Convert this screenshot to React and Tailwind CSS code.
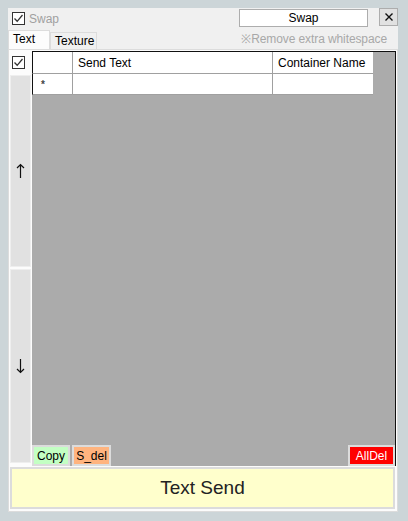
import React from 'react';

const Check = ({ className = '' }) => (
  <div className={`w-[13px] h-[13px] border border-[#333] bg-white flex items-center justify-center ${className}`}>
    <svg width="11" height="11" viewBox="0 0 11 11">
      <path d="M1.5 5.5 L4.2 8.3 L9.5 2" fill="none" stroke="#333" strokeWidth="1.3" />
    </svg>
  </div>
);

const GridButton = ({ label, color, text = 'text-black', pad = 'px-[2px]' }) => (
  <div className="border-2 border-[#dcdcdc] bg-[#dcdcdc]">
    <div className={`${pad} h-[17px] flex items-center justify-center text-[12px] ${color} ${text}`}>{label}</div>
  </div>
);

const Arrow = ({ down }) => (
  <svg width="9" height="16" viewBox="0 0 9 16">
    {down ? (
      <path d="M4.5 1 V14.5 M1 11 L4.5 14.5 L8 11" fill="none" stroke="#111" strokeWidth="1.2" />
    ) : (
      <path d="M4.5 15 V1.5 M1 5 L4.5 1.5 L8 5" fill="none" stroke="#111" strokeWidth="1.2" />
    )}
  </svg>
);

export default function App() {
  return (
    <div
      className="w-[408px] h-[521px] bg-[#ccd5d8] pt-[8px] pl-[8px]"
      style={{ fontFamily: '"Liberation Sans", Arial, sans-serif' }}
    >
      <div className="w-[390px] h-[504px] bg-[#f0f0f0] flex flex-col">
        {/* top row */}
        <div className="h-[22px] flex items-start">
          <div className="flex items-center mt-[4px] ml-[4px] gap-[4px]">
            <Check />
            <span className="text-[12px] text-[#a0a0a0] leading-none">Swap</span>
          </div>
          <div className="ml-auto mt-[1px] w-[129px] h-[18px] bg-white border border-[#adadad] flex items-center justify-center text-[12px] text-black">
            Swap
          </div>
          <div className="ml-[11px] w-[19px] h-[18px] bg-[#e1e1e1] border border-[#adadad] flex items-center justify-center">
            <svg width="10" height="10" viewBox="0 0 10 10">
              <path d="M1.5 1.5 L8.5 8.5 M8.5 1.5 L1.5 8.5" stroke="#111" strokeWidth="1.4" />
            </svg>
          </div>
        </div>

        {/* tabs row */}
        <div className="h-[19px] flex items-end">
          <div className="w-[42px] h-[19px] bg-[#fcfcfc] border border-b-0 border-[#dcdcdc] text-[12px] text-black pl-[4px] leading-[16px]">
            Text
          </div>
          <div className="w-[47px] h-[17px] bg-[#f0f0f0] border border-b-0 border-[#dcdcdc] text-[12px] text-black pl-[4px] leading-[17px]">
            Texture
          </div>
          <div className="ml-auto mr-[11px] self-start mt-[3px] text-[12px] text-[#a8a8a8] leading-none tracking-[-0.1px]">
            ※Remove extra whitespace
          </div>
        </div>

        {/* tab page */}
        <div className="flex-1 bg-[#fcfcfc] border border-[#dcdcdc] flex flex-col">
          <div className="flex flex-1">
            {/* left column */}
            <div className="w-[23px] flex flex-col items-start">
              <Check className="mt-[6px] ml-[3px]" />
              <div className="mt-[6px] ml-[1px] w-[21px] h-[192px] bg-[#e1e1e1] border border-[#eeeeee] flex items-center justify-center">
                <Arrow />
              </div>
              <div className="mt-[2px] ml-[1px] w-[21px] h-[194px] bg-[#e1e1e1] border border-[#eeeeee] flex items-center justify-center">
                <Arrow down />
              </div>
            </div>

            {/* grid */}
            <div className="mt-[1px] w-[364px] h-[415px] bg-[#ababab] border-t border-r border-[#111] flex flex-col">
              <div className="flex h-[22px] bg-white border-b border-l border-[#a0a0a0] border-l-[#111] w-[341px] text-[12px] text-black">
                <div className="w-[40px] border-r border-[#a0a0a0]" />
                <div className="w-[200px] border-r border-[#a0a0a0] pl-[5px] flex items-center">Send Text</div>
                <div className="flex-1 pl-[5px] flex items-center">Container Name</div>
              </div>
              <div className="flex h-[21px] bg-white border-b border-l border-[#a0a0a0] border-l-[#111] w-[341px] text-[12px] text-black">
                <div className="w-[40px] border-r border-[#a0a0a0] flex items-center pl-[8px] text-[#444] text-[10px] font-bold">*</div>
                <div className="w-[200px] border-r border-[#a0a0a0]" />
                <div className="flex-1" />
              </div>
              <div className="flex-1" />
              <div className="flex items-end justify-between">
                <div className="flex gap-[2px]">
                  <GridButton label="Copy" color="bg-[#c3ffc3]" pad="w-[34px]" />
                  <GridButton label="S_del" color="bg-[#ffb47f]" pad="w-[35px]" />
                </div>
                <GridButton label="AllDel" color="bg-[#ff0000]" text="text-white" pad="w-[43px]" />
              </div>
            </div>
          </div>

          {/* Text Send */}
          <div className="mt-[1px] mb-[2px] ml-[1px] w-[385px] h-[42px] bg-[#ffffcc] border-2 border-[#dcdcdc] flex items-center justify-center text-[19px] text-[#222]">
            Text Send
          </div>
        </div>
      </div>
    </div>
  );
}
